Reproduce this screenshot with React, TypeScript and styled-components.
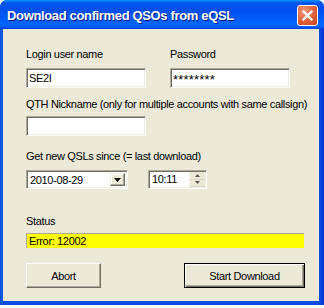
import React from "react";
import styled, { createGlobalStyle } from "styled-components";

const GlobalStyle = createGlobalStyle`
  html, body {
    margin: 0;
    padding: 0;
    background: #ffffff;
  }
  body {
    width: 324px;
    height: 308px;
    overflow: hidden;
    font-family: "Liberation Sans", Arial, sans-serif;
  }
`;

function App() {
  return (
    <>
      <GlobalStyle />
      <Window>
        <TitleBar>
          <Title>Download confirmed QSOs from eQSL</Title>
          <CloseButton aria-label="Close">
            <svg width="13" height="13" viewBox="0 0 13 13">
              <path
                d="M2.5 2.5 L10.5 10.5 M10.5 2.5 L2.5 10.5"
                stroke="#ffffff"
                strokeWidth="2.2"
                strokeLinecap="square"
              />
            </svg>
          </CloseButton>
        </TitleBar>
        <Body>
          <LoginGrid>
            <Label>Login user name</Label>
            <Label>Password</Label>
            <TextField $width={120} readOnly value="SE2I" />
            <TextField $width={120} $secret readOnly value="********" />
          </LoginGrid>

          <Label $top={10}>QTH Nickname (only for multiple accounts with same callsign)</Label>
          <TextField $width={120} $top={5} readOnly value="" />

          <Label $top={14}>Get new QSLs since (= last download)</Label>
          <DateRow>
            <Combo>
              <FieldText>2010-08-29</FieldText>
              <DropButton>
                <svg width="7" height="4" viewBox="0 0 7 4">
                  <path d="M0 0 H7 L3.5 4 Z" fill="#000000" />
                </svg>
              </DropButton>
            </Combo>
            <TimeField>
              <FieldText>10:11</FieldText>
              <Spinner>
                <SpinHalf>
                  <svg width="5" height="3" viewBox="0 0 5 3">
                    <path d="M2.5 0 L5 3 H0 Z" fill="#555555" />
                  </svg>
                </SpinHalf>
                <SpinHalf>
                  <svg width="5" height="3" viewBox="0 0 5 3">
                    <path d="M0 0 H5 L2.5 3 Z" fill="#555555" />
                  </svg>
                </SpinHalf>
              </Spinner>
            </TimeField>
          </DateRow>

          <Label $top={26}>Status</Label>
          <StatusBar>Error: 12002</StatusBar>

          <ButtonRow>
            <Button $width={75}>Abort</Button>
            <Button $width={121} $default>
              Start Download
            </Button>
          </ButtonRow>
        </Body>
      </Window>
    </>
  );
}

export default App;

// 창 틀
const Window = styled.div`
  display: flex;
  flex-direction: column;
  width: 324px;
  height: 305px;
  background: linear-gradient(90deg, #0831d9 0px, #166aee 1px, #0a4de0 3px, #0a4de0 319px, #0831d9 324px);
  border-radius: 7px 7px 0 0;
  overflow: hidden;
`;

const TitleBar = styled.div`
  display: flex;
  align-items: center;
  justify-content: space-between;
  height: 29px;
  padding: 0 6px 0 7px;
  box-sizing: border-box;
  background: linear-gradient(
    180deg,
    #0997ff 0%,
    #0053ee 10%,
    #0050ee 40%,
    #0066ff 85%,
    #005bff 93%,
    #003dd7 100%
  );
`;

const Title = styled.div`
  color: #ffffff;
  font-family: "Liberation Sans", Arial, sans-serif;
  font-weight: bold;
  font-size: 13px;
  letter-spacing: -0.35px;
  text-shadow: 1px 1px 0 #0a1883;
  margin-top: 1px;
`;

const CloseButton = styled.div`
  display: flex;
  align-items: center;
  justify-content: center;
  width: 21px;
  height: 21px;
  box-sizing: border-box;
  border: 1px solid #ffffff;
  border-radius: 3px;
  background: radial-gradient(circle at 35% 30%, #f29a7c 0%, #e0603a 55%, #c5401c 100%);
  margin-top: 1px;
`;

// 본문
const Body = styled.div`
  flex: 1;
  display: flex;
  flex-direction: column;
  align-items: flex-start;
  margin: 0 5px 4px 3px;
  padding: 19px 0 0 23px;
  background: #ece9d8;
  font-size: 11px;
  letter-spacing: -0.35px;
`;

const Label = styled.div<{ $top?: number }>`
  margin-top: ${(p) => p.$top ?? 0}px;
  font-size: 11px;
  line-height: 13px;
  color: #000000;
  white-space: nowrap;
`;

const LoginGrid = styled.div`
  display: grid;
  grid-template-columns: 120px 120px;
  column-gap: 24px;
  row-gap: 7px;
`;

const sunken = `
  box-sizing: border-box;
  background: #ffffff;
  border-style: solid;
  border-width: 1px;
  border-color: #aca899 #ffffff #ffffff #aca899;
  box-shadow: inset 1px 1px 0 #716f64, inset -1px -1px 0 #f1efe2;
`;

const TextField = styled.input<{ $width: number; $top?: number; $secret?: boolean }>`
  ${sunken}
  width: ${(p) => p.$width}px;
  height: 20px;
  margin: ${(p) => p.$top ?? 0}px 0 0 0;
  padding: ${(p) => (p.$secret ? "3px 0 0 2px" : "0 0 0 2px")};
  font-family: "Liberation Sans", Arial, sans-serif;
  font-size: ${(p) => (p.$secret ? "13px" : "11px")};
  letter-spacing: ${(p) => (p.$secret ? "0.2px" : "-0.35px")};
  color: #000000;
  outline: none;
`;

const DateRow = styled.div`
  display: flex;
  gap: 20px;
  margin-top: 7px;
`;

const Combo = styled.div`
  ${sunken}
  display: flex;
  align-items: stretch;
  justify-content: space-between;
  width: 102px;
  height: 19px;
  padding: 2px 2px 2px 0;
`;

const FieldText = styled.div`
  font-size: 11px;
  line-height: 15px;
  padding-left: 3px;
  color: #000000;
`;

const DropButton = styled.div`
  display: flex;
  align-items: center;
  justify-content: center;
  width: 15px;
  box-sizing: border-box;
  background: #ece9d8;
  border-style: solid;
  border-width: 1px;
  border-color: #f1efe2 #716f64 #716f64 #f1efe2;
  box-shadow: inset -1px -1px 0 #aca899, inset 1px 1px 0 #ffffff;
`;

const TimeField = styled(Combo)`
  width: 59px;
  padding: 1px 1px 1px 0;
`;

const Spinner = styled.div`
  display: flex;
  flex-direction: column;
  width: 16px;
`;

const SpinHalf = styled.div`
  flex: 1;
  display: flex;
  align-items: center;
  justify-content: center;
  background: #ece9d8;
  border-bottom: 1px solid #d8d4c4;
  border-left: 1px solid #f7f6f0;
`;

const StatusBar = styled.div`
  box-sizing: border-box;
  width: 278px;
  height: 15px;
  margin-top: 5px;
  padding-left: 2px;
  background: #ffff00;
  border-top: 1px solid #aca899;
  border-left: 1px solid #aca899;
  font-size: 11px;
  line-height: 14px;
  color: #000000;
`;

const ButtonRow = styled.div`
  display: flex;
  justify-content: space-between;
  width: 279px;
  margin-top: 15px;
`;

const Button = styled.div<{ $width: number; $default?: boolean }>`
  display: flex;
  align-items: center;
  justify-content: center;
  box-sizing: border-box;
  width: ${(p) => p.$width}px;
  height: 25px;
  background: #ece9d8;
  font-size: 11px;
  color: #000000;
  border-style: solid;
  border-width: 1px;
  border-color: ${(p) => (p.$default ? "#000000" : "#ffffff #716f64 #716f64 #ffffff")};
  box-shadow: ${(p) =>
    p.$default
      ? "inset 1px 1px 0 #ffffff, inset -1px -1px 0 #716f64, inset -2px -2px 0 #aca899"
      : "inset -1px -1px 0 #aca899"};
`;
